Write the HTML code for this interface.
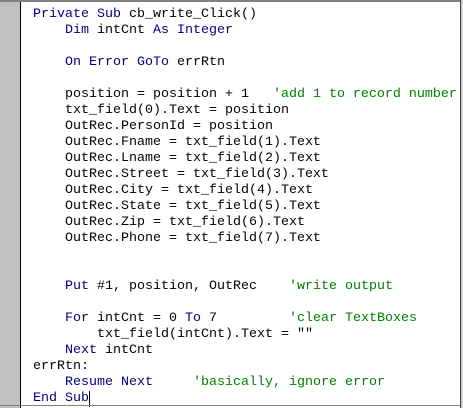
<html><head><style>
body{margin:0;width:463px;height:408px;background:#fff;position:relative;overflow:hidden}
.gut{position:absolute;left:0;top:0;width:20px;height:408px;background:#c0c0c0}
.vl{position:absolute;left:20px;top:0;width:1px;height:408px;background:#000}
.top{position:absolute;left:0;top:0;width:463px;height:2px;background:#808080}
.bot{position:absolute;left:0;top:405px;width:463px;height:1px;background:#808080}
.rt{position:absolute;left:460px;top:0;width:3px;height:408px;background:#d4d0c8;border-left:1px solid #404040}
pre{position:absolute;left:33px;top:7px;margin:0;font-family:"Liberation Mono",monospace;font-size:13.333px;line-height:16px;color:#000;width:427px;overflow:hidden}
.k{color:#00007f}.c{color:#007f00}
.cur{display:inline-block;width:1px;height:16px;background:#000;vertical-align:top}
</style></head><body>
<div class="gut"></div><div class="vl"></div>
<pre><span class="k">Private Sub</span> cb_write_Click()
    <span class="k">Dim</span> intCnt <span class="k">As Integer</span>

    <span class="k">On Error GoTo</span> errRtn

    position = position + 1   <span class="c">'add 1 to record number</span>
    txt_field(0).Text = position
    OutRec.PersonId = position
    OutRec.Fname = txt_field(1).Text
    OutRec.Lname = txt_field(2).Text
    OutRec.Street = txt_field(3).Text
    OutRec.City = txt_field(4).Text
    OutRec.State = txt_field(5).Text
    OutRec.Zip = txt_field(6).Text
    OutRec.Phone = txt_field(7).Text


    <span class="k">Put</span> #1, position, OutRec    <span class="c">'write output</span>

    <span class="k">For</span> intCnt = 0 <span class="k">To</span> 7         <span class="c">'clear TextBoxes</span>
        txt_field(intCnt).Text = ""
    <span class="k">Next</span> intCnt
errRtn:
    <span class="k">Resume Next</span>     <span class="c">'basically, ignore error</span>
<span class="k">End Sub</span><span class="cur"></span></pre>
<div class="top"></div><div class="bot"></div><div class="rt"></div>
</body></html>
